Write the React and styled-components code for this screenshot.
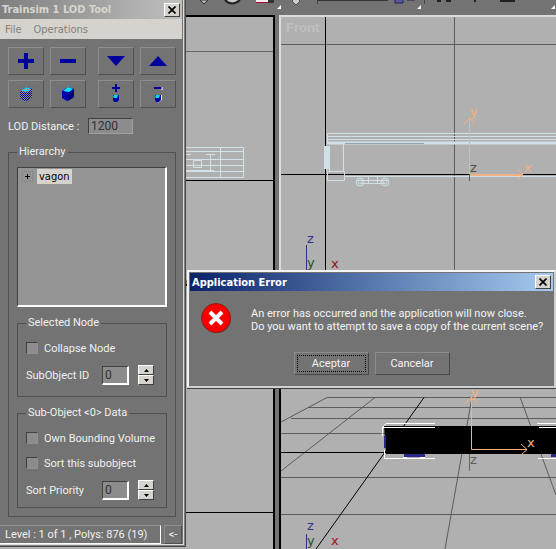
import React, { useState } from "react";
import styled, { createGlobalStyle } from "styled-components";

const GlobalStyle = createGlobalStyle`
  * {
    box-sizing: border-box;
  }

  body {
    margin: 0;
    background: #b0b0b0;
    font-family: Roboto, "Liberation Sans", Arial, sans-serif;
    font-size: 11px;
  }

  button, input {
    font: inherit;
    color: inherit;
  }
`;

const App = () => {
  const [collapse, setCollapse] = useState(false);
  const [bounding, setBounding] = useState(false);
  const [sorted, setSorted] = useState(false);

  return (
    <>
      <GlobalStyle />
      <Desktop>
        <ToolPanel>
          <PanelTitle>
            <span>Trainsim 1 LOD Tool</span>
            <CloseButton aria-label="Close tool">
              <CloseIcon />
            </CloseButton>
          </PanelTitle>
          <MenuBar>
            <MenuItem>File</MenuItem>
            <MenuItem>Operations</MenuItem>
          </MenuBar>

          <PanelBody>
            <ButtonRow>
              <ButtonBlock>
                <ToolButton aria-label="Add"><PlusIcon /></ToolButton>
                <ToolButton aria-label="Remove"><MinusIcon /></ToolButton>
                <ToolButton aria-label="Wire box"><BoxIcon wire /></ToolButton>
                <ToolButton aria-label="Solid box"><BoxIcon /></ToolButton>
              </ButtonBlock>
              <ButtonBlock>
                <ToolButton aria-label="Move down"><ArrowIcon points="3,5 21,5 12,15" /></ToolButton>
                <ToolButton aria-label="Move up"><ArrowIcon points="3,15 21,15 12,5" /></ToolButton>
                <ToolButton aria-label="Add object"><SmallBoxIcon plus /></ToolButton>
                <ToolButton aria-label="Remove object"><SmallBoxIcon /></ToolButton>
              </ButtonBlock>
            </ButtonRow>

            <DistanceRow>
              <DistanceLabel htmlFor="distance">LOD Distance :</DistanceLabel>
              <DistanceInput id="distance" defaultValue="1200" />
            </DistanceRow>

            <Hierarchy>
              <Legend>Hierarchy</Legend>
              <Tree>
                <TreeRow>
                  <Expander aria-label="Expand vagon">
                    <svg width="9" height="9">
                      <path d="M2 4.500h5M4.500 2v5" stroke="#000" />
                    </svg>
                  </Expander>
                  <NodeName>vagon</NodeName>
                </TreeRow>
              </Tree>

              <Group $bottom="11px">
                <Legend>Selected Node</Legend>
                <CheckRow>
                  <Check type="checkbox" checked={collapse} onChange={() => setCollapse(!collapse)} />
                  Collapse Node
                </CheckRow>
                <SpinRow id="subobject" label="SubObject ID" />
              </Group>

              <Group $bottom="7px">
                <Legend>Sub-Object &lt;0&gt; Data</Legend>
                <CheckRow>
                  <Check type="checkbox" checked={bounding} onChange={() => setBounding(!bounding)} />
                  Own Bounding Volume
                </CheckRow>
                <CheckRow>
                  <Check type="checkbox" checked={sorted} onChange={() => setSorted(!sorted)} />
                  Sort this subobject
                </CheckRow>
                <SpinRow id="priority" label="Sort Priority" />
              </Group>
            </Hierarchy>
          </PanelBody>

          <StatusBar>
            <StatusText>Level : 1 of 1 , Polys: 876 (19)</StatusText>
            <StatusButton>&lt;-</StatusButton>
          </StatusBar>
        </ToolPanel>

        <Workspace>
          <MainToolbar>
            <ToolbarDrawing />
          </MainToolbar>
          <Viewports>
            <Viewport $side="right">
              <TopView />
            </Viewport>
            <Viewport $side="left" $active>
              <FrontView />
            </Viewport>
            <Viewport $side="right">
              <Drawing>
                <path d="M0 226.500H400" stroke="#000" />
              </Drawing>
            </Viewport>
            <Viewport $side="left">
              <PerspectiveView />
            </Viewport>
          </Viewports>
        </Workspace>

        <Dialog role="alertdialog" aria-labelledby="dialog-title">
          <DialogTitle>
            <span id="dialog-title">Application Error</span>
            <CloseButton aria-label="Close dialog">
              <CloseIcon />
            </CloseButton>
          </DialogTitle>
          <Message>
            <ErrorIcon />
            <MessageText>
              An error has occurred and the application will now close.
              <br />
              Do you want to attempt to save a copy of the current scene?
            </MessageText>
          </Message>
          <DialogButtons>
            <DialogButton $focused><span>Aceptar</span></DialogButton>
            <DialogButton><span>Cancelar</span></DialogButton>
          </DialogButtons>
        </Dialog>
      </Desktop>
    </>
  );
};

export default App;

const SpinRow = ({ id, label }) => {
  const [value, setValue] = useState(0);
  return (
    <SpinLine>
      <SpinLabel htmlFor={id}>{label}</SpinLabel>
      <SpinInput id={id} value={value} onChange={(e) => setValue(e.target.value)} />
      <SpinButtons>
        <SpinButton aria-label={`${label} up`} onClick={() => setValue(Number(value) + 1)}>
          <svg width="5" height="3"><path d="M0 3L2.500 0L5 3z" /></svg>
        </SpinButton>
        <SpinButton aria-label={`${label} down`} onClick={() => setValue(Number(value) - 1)}>
          <svg width="5" height="3"><path d="M0 0L2.500 3L5 0z" /></svg>
        </SpinButton>
      </SpinButtons>
    </SpinLine>
  );
};

/* ---------- icons ---------- */

const CloseIcon = () => (
  <svg width="8" height="8">
    <path d="M0.500 0.500L7.500 7.500M7.500 0.500L0.500 7.500" stroke="#000" strokeWidth="1.700" />
  </svg>
);

const PlusIcon = () => (
  <svg width="16" height="16">
    <path d="M6 0h4v6h6v4h-6v6h-4v-6h-6v-4h6z" fill="#00009c" />
  </svg>
);

const MinusIcon = () => (
  <svg width="16" height="4">
    <path d="M0 0h16v4h-16z" fill="#00009c" />
  </svg>
);

const ArrowIcon = ({ points }) => (
  <svg width="24" height="20">
    <polygon points={points} fill="#00009c" />
  </svg>
);

const BoxIcon = ({ wire }) => (
  <svg width="16" height="18">
    <path d="M2 6L8 2L14 4V12L7 16L2 13z" fill="#0000b0" />
    <path d="M3 6L8 2L13 4L9 7z" fill="#00e8ff" />
    <path d="M9 8L14 5V12L8 16z" fill="#000078" />
    {wire && (
      <>
        <defs>
          <pattern id="dither" width="2" height="2" patternUnits="userSpaceOnUse">
            <path d="M0 0h1v1h-1zM1 1h1v1h-1z" fill="#8c8c8c" />
          </pattern>
        </defs>
        <path d="M2 6L8 2L14 4V12L7 16L2 13z" fill="url(#dither)" />
      </>
    )}
  </svg>
);

const SmallBoxIcon = ({ plus }) => (
  <svg width="12" height="20">
    <path d={plus ? "M2 4h8M6 0v8" : "M2 4h8"} stroke="#00009c" strokeWidth="2" />
    {!plus && <path d="M10 3v3M9.500 11v5l-3 2" stroke="#fff" fill="none" />}
    <path d="M3 11h6v5l-2 2h-3l-1-2z" fill="#0000a0" />
    <path d="M3 13l1-2h4l-1 3h-3z" fill="#00d8f0" />
  </svg>
);

const ErrorIcon = () => (
  <ErrorSvg width="32" height="32">
    <circle cx="17" cy="17" r="14" fill="#4c4c4c" />
    <circle cx="16" cy="16" r="14.500" fill="#f80000" stroke="#8c2020" />
    <path d="M10 10L22 22M22 10L10 22" stroke="#fff" strokeWidth="4" />
  </ErrorSvg>
);

const ToolbarDrawing = () => (
  <Drawing>
    <path d="M14 0L18 4L22 0z" fill="#b8b8b8" stroke="#303030" />
    <path d="M39 0Q46 7 54 0" fill="#c8c8c8" stroke="#202020" strokeWidth="2" />
    <path d="M70 0h12v2h-12z" fill="#eee" />
    <path d="M70 2h12v1h-12z" fill="#b00030" />
    <path d="M82 0h6v3h-6zM131 0h71v1h-71z" fill="#333" />
    <path d="M91 9l4-4v4zM231 9l4-4v4zM365 9l4-4v4z" fill="#fff" />
    <path d="M106 1l4-4 4 4-4 4z" fill="#ccc" stroke="#555" />
    <path d="M131.500 0V4M238.500 0V4" stroke="#444" />
    <path d="M209 -1h8v4h-8zM221 -1h8v1h-8z" fill="#5858a0" stroke="#202050" />
    <path d="M251 1h4M260 1h5M289 0v2M315 -2v3h13v-3" fill="none" stroke="#202020" strokeWidth="2" />
  </Drawing>
);

/* ---------- viewport drawings ---------- */

const TopView = () => (
  <Drawing>
    <path d="M0 34.500H400" stroke="#666" />
    <path d="M0 163.500H400" stroke="#000" />
    <g fill="none" stroke="#d2e2e8">
      <path d="M0 130.500H57.500V160.500H0M0 134.500H57M0 142.500H57M0 148.500H57M0 154.500H57M34.500 130V160M24.500 137V154" />
      <path d="M0 137.500H5M20 137.500H29M0 153.500H28M7.500 143.500h8v7h-8z" />
    </g>
  </Drawing>
);

const FrontView = () => (
  <Drawing>
    <path d="M0 27.500H1000M173.500 0V1000" stroke="#5c5c5c" />
    <path d="M0 157.500H1000M44.500 0V1000" stroke="#000" />
    <ViewLabel x="5" y="15">Front</ViewLabel>
    <g fill="none" stroke="#cfe0e7">
      <path d="M46 116.500H1000M46 119.500H1000M46 122.500H1000M46.500 116V126" />
      <path d="M46 126H1000" strokeWidth="3" />
      <path d="M46 129V154M48.500 129V154M62.500 127V154M46.500 154.500h17v9h-17zM64 159.500H1000" />
      <circle cx="79" cy="165" r="4" />
      <circle cx="104" cy="165" r="4" />
      <circle cx="79" cy="165" r="2" />
      <circle cx="104" cy="165" r="2" />
      <path d="M76 163.500H108M79 166.500H104M87.500 160V166M96.500 160V166" />
    </g>
    <path d="M43 129h5v23h-5z" fill="#cfe0e7" />
    <path d="M64 126.500H143" stroke="#92a4ac" />
    <g fill="none" stroke="#f5b080">
      <path d="M188.500 101V157.500H242M183 107L188.500 101L194 106M236 163L242 157.500L236 152" />
      <path d="M189 158.500H240" />
    </g>
    <path d="M188.500 157V164" stroke="#555" />
    <AxisLabel x="189" y="99" fill="#f5b080">y</AxisLabel>
    <AxisLabel x="243" y="155" fill="#f5b080">x</AxisLabel>
    <AxisLabel x="189" y="155" fill="#4c4c4c">z</AxisLabel>
    <path d="M25.500 228V260" stroke="#30308c" />
    <AxisLabel x="26" y="226" fill="#30308c">z</AxisLabel>
    <AxisLabel x="26" y="250" fill="#285028">y</AxisLabel>
    <AxisLabel x="50" y="251" fill="#8c1020">x</AxisLabel>
  </Drawing>
);

const PerspectiveView = () => (
  <Drawing>
    <path
      d="M46 111.500H1000M27 121.500H1000M10 132.500H1000M0 147.500H1000M0 191.500H1000M0 228.500H1000M0 136L46 111.500M0 185L94 111.500M191 111L164 263M239 111L275 209"
      stroke="#5c5c5c"
      fill="none"
    />
    <path d="M0 166.500H1000M35 263L143 111.500" stroke="#000" />
    <path d="M103 140H1000V168H105z" fill="#000" />
    <path d="M123 168h21v3h-21zM270 168h30v3h-30zM103 150h2v12h-2z" fill="#29298c" />
    <g fill="none" stroke="#fff">
      <path d="M101.500 150V141.500L105 137.500H154M101 141.500H154M103.500 164V172.500H154" />
      <path d="M256 137.500H400M258 141.500H400M257 172.500H400M122 171.500H126M139 171.500H144" />
    </g>
    <g fill="none" stroke="#f5b080">
      <path d="M190.500 111V163.500H246M185 117L190.500 111L196 117M240 158L246 163.500L240 169" />
    </g>
    <path d="M188.500 168V185" stroke="#666" />
    <AxisLabel x="190" y="111" fill="#f5b080">y</AxisLabel>
    <AxisLabel x="246" y="161" fill="#f5b080">x</AxisLabel>
    <AxisLabel x="189" y="178" fill="#5c5c5c">z</AxisLabel>
    <path d="M25.500 248V263" stroke="#30308c" />
    <AxisLabel x="26" y="244" fill="#30308c">z</AxisLabel>
    <AxisLabel x="26" y="259" fill="#285028">y</AxisLabel>
    <AxisLabel x="50" y="259" fill="#a01020">x</AxisLabel>
  </Drawing>
);

const Drawing = styled.svg`
  display: block;
  width: 100%;
  height: 100%;
`;

const ErrorSvg = styled.svg`
  flex: none;
`;

const AxisLabel = styled.text`
  font: 13px "DejaVu Sans", sans-serif;
`;

const ViewLabel = styled.text`
  font: bold 13px "Liberation Sans", sans-serif;
  fill: #c0c0c0;
`;

/* ---------- layout ---------- */

const Desktop = styled.div`
  position: relative;
  display: flex;
  align-items: flex-start;
  min-height: 100vh;
  overflow: hidden;
`;

const ToolPanel = styled.section`
  flex: none;
  width: 186px;
  padding: 0 3px 2px 0;
  background: #737373;
  color: #f0f0f0;
  border-right: 1px solid #484848;
  border-bottom: 1px solid #484848;
  box-shadow: inset -1px -1px #808080, inset -2px -2px #dcdcdc;
`;

const TitleBar = styled.header`
  display: flex;
  align-items: center;
  justify-content: space-between;
  height: 19px;
  padding: 0 2px;
  font: bold 11px "DejaVu Sans Condensed", "DejaVu Sans", sans-serif;
`;

const PanelTitle = styled(TitleBar)`
  background: linear-gradient(90deg, #808080, #c0c0c0);
  color: #d8d5ce;
`;

const CloseButton = styled.button`
  display: flex;
  align-items: center;
  justify-content: center;
  width: 16px;
  height: 14px;
  padding: 0;
  background: #d6d3ce;
  border: 1px solid;
  border-color: #fff #404040 #404040 #fff;
`;

const MenuBar = styled.nav`
  display: flex;
  gap: 12px;
  height: 20px;
  padding: 0 5px;
  background: #d6d3ce;
`;

const MenuItem = styled.button`
  padding: 0;
  background: none;
  border: 0;
  color: #808080;
  font: 11px "DejaVu Sans Condensed", "DejaVu Sans", sans-serif;
`;

const PanelBody = styled.div`
  padding: 8px 6px 8px 8px;
`;

const ButtonRow = styled.div`
  display: flex;
  gap: 12px;
`;

const ButtonBlock = styled.div`
  display: grid;
  grid-template-columns: 36px 36px;
  gap: 5px 6px;
`;

const ToolButton = styled.button`
  display: flex;
  align-items: center;
  justify-content: center;
  height: 28px;
  padding: 0;
  background: #737373;
  border: 1px solid;
  border-color: #8c8c8c #505050 #505050 #8c8c8c;
`;

const DistanceRow = styled.div`
  display: flex;
  align-items: center;
  margin-top: 10px;
`;

const DistanceLabel = styled.label`
  width: 80px;
`;

const Field = styled.input`
  padding: 0 2px;
  background: #8c8c8c;
  color: #303030;
  border: 1px solid;
  border-color: #404040 #a0a0a0 #a0a0a0 #404040;
  border-radius: 0;
  outline: 0;
`;

const DistanceInput = styled(Field)`
  width: 45px;
  height: 16px;
  font-size: 12px;
`;

const Group = styled.fieldset`
  min-width: 0;
  margin: 9px 0 0;
  padding: 10px 8px ${(props) => props.$bottom};
  border: 1px solid #505050;
  display: flex;
  flex-direction: column;
  gap: 9px;
`;

const Hierarchy = styled.fieldset`
  min-width: 0;
  margin: 11px 0 0;
  padding: 8px;
  border: 1px solid #505050;
`;

const Legend = styled.legend`
  padding: 0 2px;
  line-height: 14px;
`;

const Tree = styled.div`
  height: 140px;
  padding: 1px 5px;
  background: #949494;
  border: 1px solid;
  border-width: 1px 2px 2px 1px;
  border-color: #404040 #fff #fff #404040;
`;

const TreeRow = styled.div`
  display: flex;
  align-items: center;
  gap: 5px;
`;

const Expander = styled.button`
  display: flex;
  width: 9px;
  height: 9px;
  padding: 0;
  background: none;
  border: 0;
  outline: 1px dotted #808080;
`;

const NodeName = styled.span`
  padding: 0 2px;
  background: #d6d3ce;
  color: #000;
  font: 11px/15px "DejaVu Sans Condensed", "DejaVu Sans", sans-serif;
`;

const CheckRow = styled.label`
  display: flex;
  align-items: center;
  gap: 6px;
  height: 16px;
`;

const Check = styled.input`
  appearance: none;
  width: 12px;
  height: 12px;
  margin: 0;
  background: #8c8c8c;
  border: 1px solid;
  border-color: #404040 #909090 #909090 #404040;

  &:checked {
    background: #303030;
  }
`;

const SpinLine = styled.div`
  display: flex;
  align-items: center;
  height: 20px;
`;

const SpinLabel = styled.label`
  width: 76px;
`;

const SpinInput = styled(Field)`
  width: 27px;
  height: 19px;
  border-width: 1px 2px 2px 1px;
  border-color: #404040 #fff #fff #404040;
  font-size: 12px;
`;

const SpinButtons = styled.div`
  display: flex;
  flex-direction: column;
  margin-left: 9px;
`;

const SpinButton = styled.button`
  display: flex;
  align-items: center;
  justify-content: center;
  width: 16px;
  height: 10px;
  padding: 0;
  background: #d6d3ce;
  border: 1px solid;
  border-color: #fff #404040 #404040 #fff;
`;

const StatusBar = styled.footer`
  display: flex;
  gap: 3px;
  height: 19px;
`;

const StatusText = styled.div`
  flex: 1;
  padding-left: 5px;
  line-height: 18px;
  border: 1px solid;
  border-color: #909090 #fff #fff transparent;
  border-left: 0;
  white-space: nowrap;
`;

const StatusButton = styled.button`
  width: 18px;
  padding: 0;
  background: #737373;
  border: 1px solid;
  border-color: #8c8c8c #505050 #505050 #8c8c8c;
`;

const Workspace = styled.main`
  flex: 1;
  min-width: 0;
  height: 100vh;
  display: flex;
  flex-direction: column;
  background: #737373;
`;

const MainToolbar = styled.div`
  height: 15px;
`;

const Viewports = styled.div`
  flex: 1;
  min-height: 0;
  display: grid;
  grid-template-columns: 89px 1fr;
  grid-template-rows: 1fr 1fr;
  gap: 4px;
`;

const Viewport = styled.div`
  min-width: 0;
  min-height: 0;
  overflow: hidden;
  background: #b0b0b0;
  border: 0 solid ${(props) => (props.$active ? "#dcdcdc" : "#000")};
  border-top-width: 2px;
  border-${(props) => props.$side}-width: 2px;
`;

const Dialog = styled.section`
  position: absolute;
  top: 270px;
  left: 187px;
  right: 0;
  padding: 1px;
  background: #737373;
  color: #f4f4f4;
  border: 2px solid;
  border-color: #f4f4f4 #d0d0d0 #d0d0d0 #f4f4f4;
  box-shadow: 0 1px #404040;
`;

const DialogTitle = styled(TitleBar)`
  height: 18px;
  background: linear-gradient(90deg, #0a246a, #a6caf0);
  color: #fff;
`;

const Message = styled.div`
  display: flex;
  gap: 19px;
  padding: 11px 0 0 10px;
`;

const MessageText = styled.p`
  margin: 5px 0 0;
  line-height: 13px;
  white-space: nowrap;
`;

const DialogButtons = styled.div`
  display: flex;
  justify-content: center;
  gap: 6px;
  padding: 18px 0 10px;
`;

const DialogButton = styled.button`
  width: 75px;
  height: 23px;
  padding: 2px;
  background: #737373;
  border: 1px solid;
  border-color: #8c8c8c #484848 #484848 #8c8c8c;

  span {
    display: block;
    line-height: 15px;
    border: 1px dotted ${(props) => (props.$focused ? "#000" : "transparent")};
  }
`;
